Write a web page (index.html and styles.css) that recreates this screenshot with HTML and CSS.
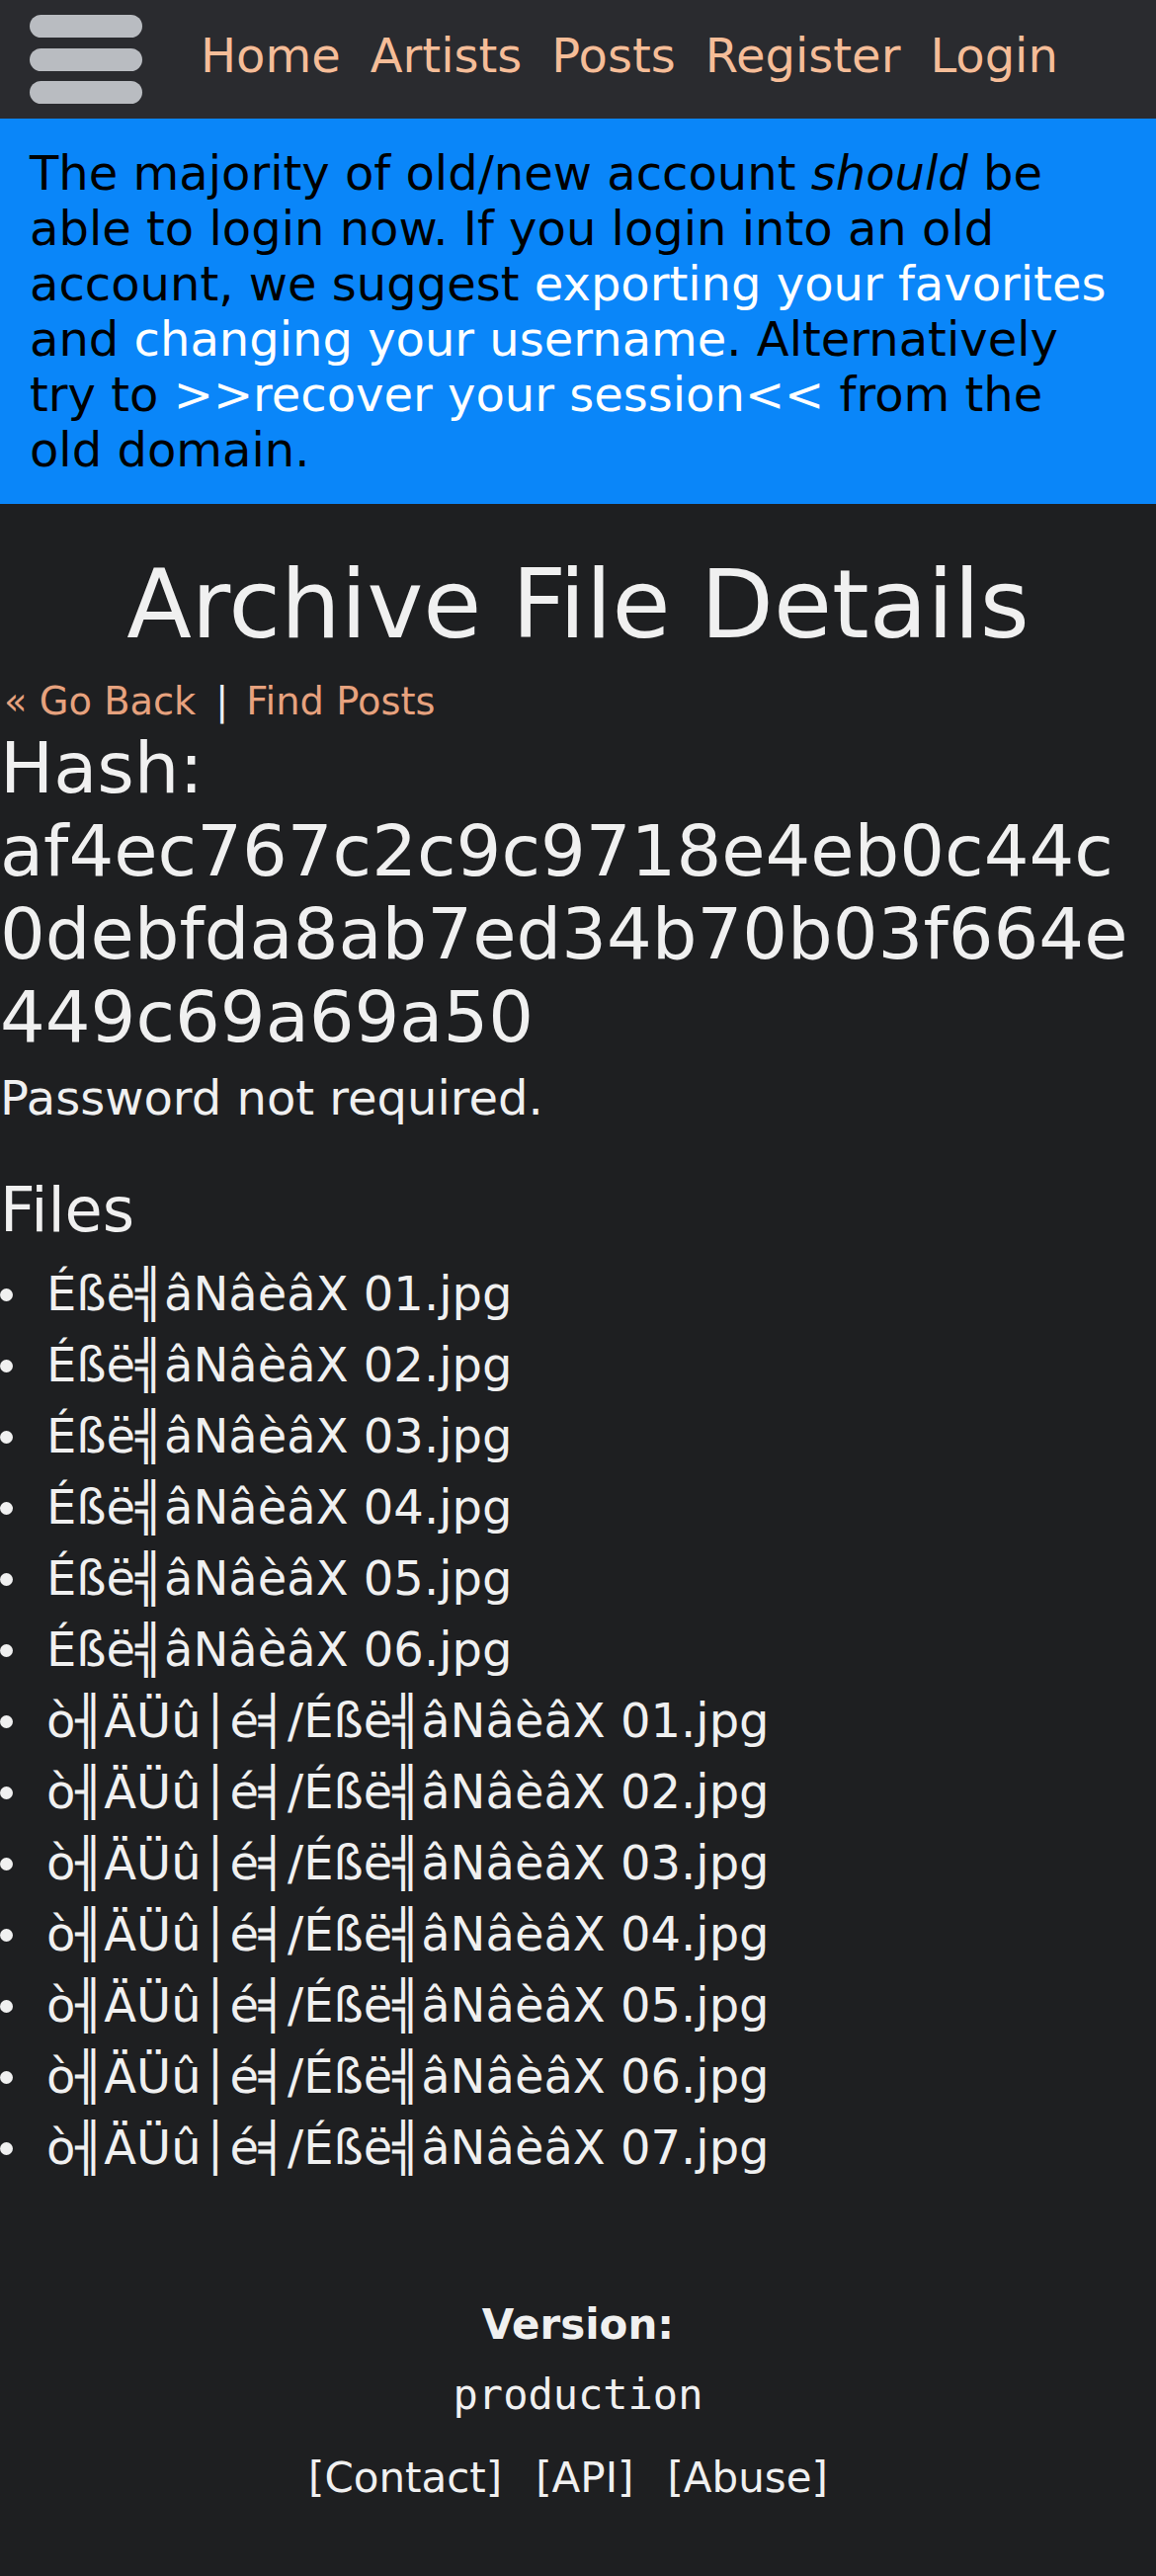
FILE: index.html
```html
<!DOCTYPE html>
<html lang="en">
<head>
<meta charset="utf-8">
<title>Archive File Details</title>
<link rel="stylesheet" href="styles.css">
</head>
<body>
<nav class="nav">
  <div class="burger"><span></span><span></span><span></span></div>
  <div class="nav-links">
    <a href="#">Home</a>
    <a href="#">Artists</a>
    <a href="#">Posts</a>
    <a href="#">Register</a>
    <a href="#">Login</a>
  </div>
</nav>
<div class="notice">
  The majority of old/new account <em>should</em> be able to login now. If you login into an old account, we suggest <a href="#">exporting your favorites</a> and <a href="#">changing your username</a>. Alternatively try to <a href="#">&gt;&gt;recover your session&lt;&lt;</a> from the old domain.
</div>
<main class="main">
  <h1 class="title">Archive File Details</h1>
  <div class="back-links"><a href="#">« Go Back</a><span class="sep">|</span><a href="#">Find Posts</a></div>
  <h2 class="hash">Hash: af4ec767c2c9c9718e4eb0c44c0debfda8ab7ed34b70b03f664e449c69a69a50</h2>
  <p class="password">Password not required.</p>
  <h3 class="files-title">Files</h3>
  <ul class="files">
    <li>Éßë╣âNâèâX 01.jpg</li>
    <li>Éßë╣âNâèâX 02.jpg</li>
    <li>Éßë╣âNâèâX 03.jpg</li>
    <li>Éßë╣âNâèâX 04.jpg</li>
    <li>Éßë╣âNâèâX 05.jpg</li>
    <li>Éßë╣âNâèâX 06.jpg</li>
    <li>ò╢ÄÜû│é╡/Éßë╣âNâèâX 01.jpg</li>
    <li>ò╢ÄÜû│é╡/Éßë╣âNâèâX 02.jpg</li>
    <li>ò╢ÄÜû│é╡/Éßë╣âNâèâX 03.jpg</li>
    <li>ò╢ÄÜû│é╡/Éßë╣âNâèâX 04.jpg</li>
    <li>ò╢ÄÜû│é╡/Éßë╣âNâèâX 05.jpg</li>
    <li>ò╢ÄÜû│é╡/Éßë╣âNâèâX 06.jpg</li>
    <li>ò╢ÄÜû│é╡/Éßë╣âNâèâX 07.jpg</li>
  </ul>
</main>
<footer class="footer">
  <div class="version">Version:</div>
  <div class="build"><code>production</code></div>
  <div class="footer-links">
    <a href="#">[Contact]</a>
    <a href="#">[API]</a>
    <a href="#">[Abuse]</a>
  </div>
</footer>
</body>
</html>
```
FILE: styles.css
```css
html {
  background: #1e1f21;
}
body {
  margin: 0;
  background: #1e1f21;
  color: #f0f0f0;
  font-family: "DejaVu Sans", sans-serif;
  font-size: 48px;
  line-height: normal;
}
a {
  text-decoration: none;
}
.nav {
  height: 120px;
  background: #2a2b2f;
  display: flex;
  align-items: center;
}
.burger {
  margin-left: 30px;
  width: 114px;
  height: 90px;
  display: flex;
  flex-direction: column;
  justify-content: space-between;
}
.burger span {
  display: block;
  height: 23px;
  border-radius: 12px;
  background: #b9bcc1;
}
.nav-links {
  margin-left: 59px;
  padding-bottom: 9px;
  display: flex;
  gap: 30px;
}
.nav-links a {
  color: #f5bd98;
}
.notice {
  background: #0a86f9;
  color: #000;
  padding: 27px 30px;
}
.notice a {
  color: #fff;
}
.main {
  overflow: hidden;
}
.title {
  margin: 46px 0 0;
  font-size: 96px;
  font-weight: normal;
  text-align: center;
  line-height: normal;
}
.back-links {
  margin-top: 19px;
  font-size: 38.4px;
  padding-left: 4px;
  color: #eef2f7;
}
.back-links a {
  color: #e7a27e;
}
.sep {
  margin: 0 18px 0 20px;
}
.hash {
  margin: 3px 0 0;
  font-size: 72px;
  font-weight: normal;
  overflow-wrap: anywhere;
}
.password {
  margin: 12px 0 0;
}
.files-title {
  margin: 49px 0 0;
  font-size: 62px;
  font-weight: normal;
}
.files {
  margin: 12px 0 0;
  padding: 0;
  list-style: none;
}
.files li {
  line-height: 72px;
}
.files li::before {
  content: "";
  display: inline-block;
  width: 13px;
  height: 13px;
  border-radius: 50%;
  background: #f0f0f0;
  margin-right: 34px;
  vertical-align: 9px;
}
.footer {
  padding: 119px 0 70px;
  text-align: center;
  font-size: 42px;
}
.version {
  font-weight: bold;
}
.build {
  margin-top: 22px;
}
.build code {
  font-family: "DejaVu Sans Mono", monospace;
  font-size: 42px;
}
.footer-links {
  margin-top: 35px;
  padding-right: 20px;
  display: flex;
  justify-content: center;
  gap: 34px;
}
.footer-links a {
  color: #f0f0f0;
}
```
